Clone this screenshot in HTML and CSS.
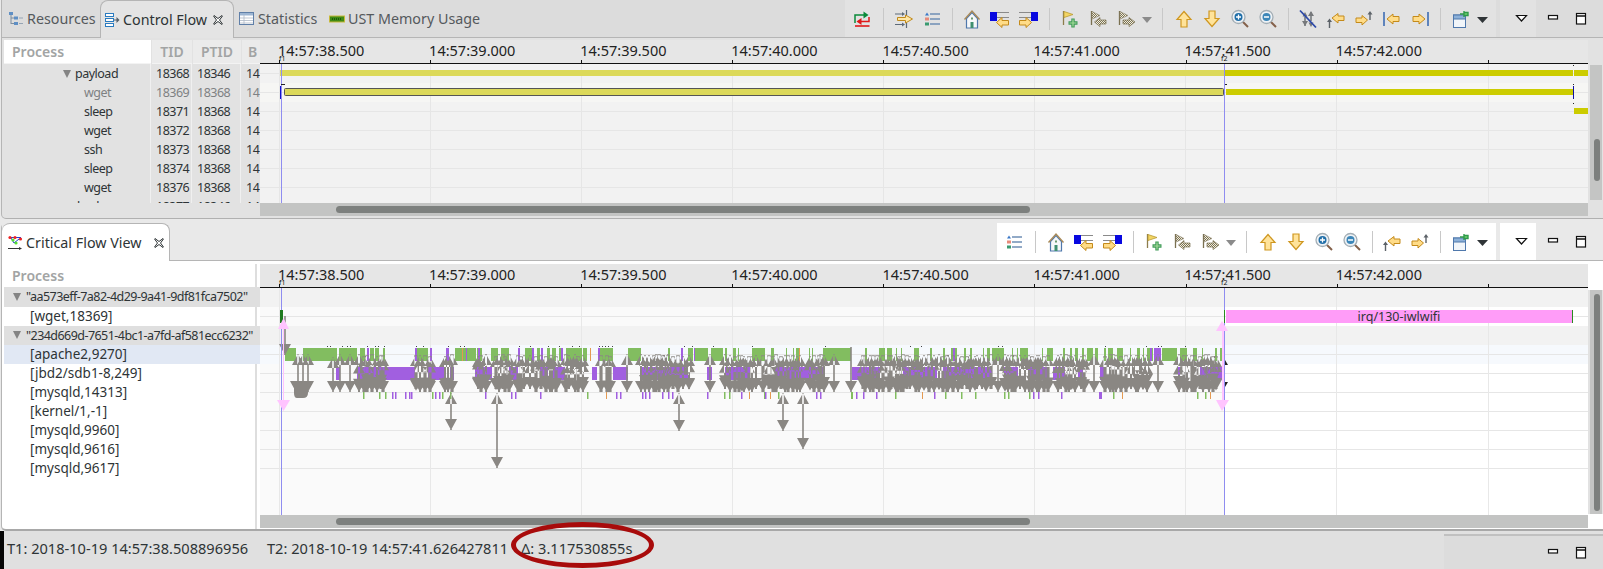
FILE: index.html
```html
<!DOCTYPE html>
<html lang="en">
<head>
<meta charset="utf-8">
<title>Critical Flow View</title>
<link rel="stylesheet" href="styles.css">
</head>
<body>
<svg class="defs" width="0" height="0" aria-hidden="true">
  <defs>
    <pattern id="hatch" width="2" height="2" patternUnits="userSpaceOnUse"><rect width="2" height="2" fill="#f4f0dc"/><rect width="1" height="1" fill="#7a7258"/><rect x="1" y="1" width="1" height="1" fill="#7a7258"/></pattern>
    <symbol id="i-sync" viewBox="0 0 20 20"><path d="M3 14V6H12" fill="none" stroke="#0a8a3a" stroke-width="1.500"/><path d="M11.500 2.500l5 3.500-5 3.500z" fill="#0a8a3a"/><path d="M17 8V12.500H9" fill="none" stroke="#e01818" stroke-width="1.500"/><path d="M9.500 9l-5 3.500 5 3.500z" fill="#e01818"/><path d="M3 17H17.500" stroke="#e01818" stroke-width="1.600"/></symbol>
    <symbol id="i-align" viewBox="0 0 20 20"><path d="M1 5H8M1 15.500H8M12.500 1V6M12.500 14V19" stroke="#5d6a78" stroke-width="1.200" fill="none"/><path d="M8 3l3 2-3 2zM8 13.500l3 2-3 2z" fill="#5d6a78"/><path d="M3.500 8.500H11.500V6l7 4-7 4V11.500H3.500z" fill="#ffe7a6" stroke="#c08a1c"/></symbol>
    <symbol id="i-list" viewBox="0 0 20 20"><path d="M8 5H18M8 10H18M8 15H18" stroke="#6f8fb5" stroke-width="1.600"/><path d="M3 6.500L5 3.500 7 6.500z" fill="#3a78c8"/><rect x="3" y="8.500" width="4" height="3" fill="#e88a7a"/><rect x="3" y="13.500" width="4" height="3" fill="#3a9a70"/></symbol>
    <symbol id="i-home" viewBox="0 0 20 20"><path d="M4.500 9.500V19H15.500V9.500L10 3.500z" fill="#f6f8fa" stroke="#4f78ac" stroke-width="1.200"/><path d="M2.500 10.500L10 2l7.500 8.500" fill="none" stroke="#a98a58" stroke-width="1.400"/><rect x="8.500" y="13" width="3" height="6" fill="#3f8f70"/><rect x="9" y="8.500" width="2" height="2" fill="#6a9a70"/></symbol>
    <symbol id="i-prev" viewBox="0 0 20 20"><rect x="0" y="3" width="7" height="9" fill="#0808e0"/><path d="M7 3.500H19M7 8.500H19" stroke="#8a8a8a" stroke-width="1.200"/><path d="M6.500 13.500l5.500-5v3h6.500v4.500H12v2.500z" fill="#ffdc88" stroke="#c48a1a"/></symbol>
    <symbol id="i-next" viewBox="0 0 20 20"><rect x="13" y="3" width="7" height="9" fill="#0808e0"/><path d="M1 3.500H13M1 8.500H13" stroke="#8a8a8a" stroke-width="1.200"/><path d="M13.500 13.500l-5.500-5v3H1.500v4.500H8v2.500z" fill="#ffdc88" stroke="#c48a1a"/></symbol>
    <symbol id="i-flagadd" viewBox="0 0 20 20"><path d="M3.500 2V16" stroke="#8d7d4c" stroke-width="1.300"/><path d="M4 2.500l9 3-9 3z" fill="#f3d564" stroke="#b99a34" stroke-width=".8"/><path d="M13 9.500v9M8.500 14h9" stroke="#3f9a58" stroke-width="3.400"/><path d="M13 10.500v7M9.500 14h7" stroke="#a5dc9a" stroke-width="1.200"/></symbol>
    <symbol id="i-flagprev" viewBox="0 0 20 20"><path d="M3.500 2V16" stroke="#7a7050" stroke-width="1.300"/><path d="M4 2.500l8 4-8 3.500z" fill="url(#hatch)" stroke="#8a8268" stroke-width=".6"/><path d="M6.500 13l5.500-4.500V11h6v4h-6v2.500z" fill="url(#hatch)" stroke="#7a7050" stroke-width=".7"/></symbol>
    <symbol id="i-flagnext" viewBox="0 0 20 20"><path d="M3.500 2V16" stroke="#7a7050" stroke-width="1.300"/><path d="M4 2.500l8 4-8 3.500z" fill="url(#hatch)" stroke="#8a8268" stroke-width=".6"/><path d="M19 13l-6-4.500V11H7v4h6v2.500z" fill="url(#hatch)" stroke="#7a7050" stroke-width=".7"/></symbol>
    <symbol id="i-dd" viewBox="0 0 14 20"><path d="M2 8h10l-5 6z" fill="#8b8b8b"/></symbol>
    <symbol id="i-ddd" viewBox="0 0 14 20"><path d="M1 8h11l-5.500 6z" fill="#2f3437"/></symbol>
    <symbol id="i-up" viewBox="0 0 20 20"><path d="M10 2.500l7 8h-4V18H7v-7.500H3z" fill="#ffe39a" stroke="#cf9720" stroke-width="1.200"/></symbol>
    <symbol id="i-down" viewBox="0 0 20 20"><path d="M10 17.500l7-8h-4V2H7v7.500H3z" fill="#ffe39a" stroke="#cf9720" stroke-width="1.200"/></symbol>
    <symbol id="i-zin" viewBox="0 0 20 20"><path d="M12.500 12.500L18 18" stroke="#84604a" stroke-width="2"/><circle cx="8.500" cy="8" r="6.500" fill="#eef2f6" stroke="#a3aeb5" stroke-width="1.300"/><circle cx="8.500" cy="8" r="4" fill="#1f6ea8"/><path d="M8.500 5.500v5M6 8h5" stroke="#fff" stroke-width="1.300"/></symbol>
    <symbol id="i-zout" viewBox="0 0 20 20"><path d="M12.500 12.500L18 18" stroke="#84604a" stroke-width="2"/><circle cx="8.500" cy="8" r="6.500" fill="#eef2f6" stroke="#a3aeb5" stroke-width="1.300"/><circle cx="8.500" cy="8" r="4" fill="#3c86b8"/><path d="M6 8h5" stroke="#fff" stroke-width="1.500"/></symbol>
    <symbol id="i-hide" viewBox="0 0 20 20"><path d="M7 8V17M13 3V12" stroke="#6f7478" stroke-width="1.500"/><path d="M4 12l3 5 3-5zM10 7l3-5 3 5zM4.500 7.500L7 3l2.500 4.500zM10.500 13.500L13 18l2.500-4.500z" fill="#77797c"/><path d="M2 1.500L18 18.500" stroke="#2b48a8" stroke-width="1.800"/></symbol>
    <symbol id="i-fprev" viewBox="0 0 20 20"><path d="M3.500 11V19" stroke="#5c6268" stroke-width="1.400"/><path d="M1 13l2.500-3.500L6 13z" fill="#5c6268"/><path d="M6 9l6-4.500V7h6v4.500h-6V14z" fill="#ffdc88" stroke="#c48a1a"/></symbol>
    <symbol id="i-fnext" viewBox="0 0 20 20"><path d="M16 4V11" stroke="#5c6268" stroke-width="1.400"/><path d="M13.500 5.500L16 2l2.500 3.500z" fill="#5c6268"/><path d="M13.500 11L8 6.500V9H2v4.500h6V16z" fill="#ffdc88" stroke="#c48a1a"/></symbol>
    <symbol id="i-first" viewBox="0 0 20 20"><path d="M2 3V17" stroke="#5f84bc" stroke-width="2"/><path d="M5 10l6-5V7.500h6V12.500H11V15z" fill="#ffdc88" stroke="#c48a1a"/></symbol>
    <symbol id="i-last" viewBox="0 0 20 20"><path d="M18 3V17" stroke="#5f84bc" stroke-width="2"/><path d="M15 10L9 5V7.500H3V12.500H9V15z" fill="#ffdc88" stroke="#c48a1a"/></symbol>
    <symbol id="i-pin" viewBox="0 0 20 20"><rect x="3.500" y="6" width="12" height="12.500" fill="#f1f5f9" stroke="#4f78ac"/><rect x="3.500" y="6" width="12" height="4" fill="#8cb0d8" stroke="#4f78ac"/><path d="M10 5H14M14 2V8M14 3.500H18V6.500H14" stroke="#2f9a4a" stroke-width="1.400" fill="#6fd06f"/></symbol>
    <symbol id="i-view" viewBox="0 0 20 20"><path d="M4.500 6.500H14.500L9.500 12z" fill="#fff" stroke="#111" stroke-width="1.200"/></symbol>
    <symbol id="i-min" viewBox="0 0 20 20"><rect x="5.500" y="6.500" width="9" height="3.500" fill="#fff" stroke="#111" stroke-width="1.200"/></symbol>
    <symbol id="i-max" viewBox="0 0 20 20"><rect x="5.500" y="4.500" width="9" height="10.500" fill="#fff" stroke="#111" stroke-width="1.200"/><path d="M5.500 7H14.500" stroke="#111" stroke-width="1.500"/></symbol>
    <symbol id="i-res" viewBox="0 0 16 16"><path d="M3 2V13M3 7H6M3 12.500H6" stroke="#7d8ea0" fill="none"/><rect x="1" y="1" width="4" height="3" fill="#5f8fc4"/><rect x="6" y="5.500" width="4" height="3" fill="#5f8fc4"/><rect x="6" y="11" width="4" height="3" fill="#5f8fc4"/><path d="M11 7H15M11 12.500H15" stroke="#95a4b4"/></symbol>
    <symbol id="i-cf" viewBox="0 0 16 16"><rect x="1.500" y="1.500" width="8" height="3" fill="#fff" stroke="#2b7cc0"/><rect x="1.500" y="6.500" width="8" height="3" fill="#fff" stroke="#2b7cc0"/><rect x="1.500" y="11.500" width="8" height="3" fill="#fff" stroke="#2b7cc0"/><path d="M10 8H13" stroke="#55606a"/><path d="M12.500 5l3 3-3 3z" fill="#55606a"/></symbol>
    <symbol id="i-st" viewBox="0 0 16 16"><rect x=".5" y="1.500" width="14" height="12" fill="#fff" stroke="#5f7fa8"/><rect x="1" y="2" width="13" height="2.500" fill="#9db6d3"/><path d="M1 7H14M1 9.500H14M1 12H14M5 4V13" stroke="#aeb9c6" stroke-width=".8"/></symbol>
    <symbol id="i-ust" viewBox="0 0 16 16"><rect x=".5" y="5" width="15" height="6" fill="#3f8a14" stroke="#c8b93a"/><path d="M3 8H13" stroke="#1e5c08" stroke-dasharray="1 1" stroke-width="2"/></symbol>
    <symbol id="i-close" viewBox="0 0 12 12"><path d="M2 1.500L6 4.500 10 1.500 10.500 2 7.500 6 10.500 10 10 10.500 6 7.500 2 10.500 1.500 10 4.500 6 1.500 2z" fill="#fff" stroke="#2e3436"/></symbol>
    <symbol id="i-crit" viewBox="0 0 16 16"><path d="M2 2.500H14M4 3L7 8 12 4" stroke="#1f3fd8" fill="none"/><path d="M1 13.500H14" stroke="#333"/><path d="M12 12l3 1.500-3 1.500z" fill="#333"/><circle cx="3" cy="2.500" r="1.600" fill="#ee2222"/><circle cx="8" cy="2.500" r="1.600" fill="#ee2222"/><circle cx="13.500" cy="4" r="1.600" fill="#ee2222"/><circle cx="6" cy="5" r="1.600" fill="#55dd33"/><circle cx="9" cy="8" r="1.600" fill="#55dd33"/></symbol>
  </defs>
</svg>

<section class="pane top-pane">
  <header class="tabbar">
    <nav class="tabs">
      <div class="tab tab-res"><svg class="tabic"><use href="#i-res"/></svg><span>Resources</span></div>
      <div class="tab tab-active tab-cf"><svg class="tabic"><use href="#i-cf"/></svg><span>Control Flow</span><svg class="closeic"><use href="#i-close"/></svg></div>
      <div class="tab tab-st"><svg class="tabic"><use href="#i-st"/></svg><span>Statistics</span></div>
      <div class="tab tab-ust"><svg class="tabic"><use href="#i-ust"/></svg><span>UST Memory Usage</span></div>
    </nav>
    <div class="tools tools-top">
      <svg class="ic"><use href="#i-sync"/></svg><i class="sep"></i>
      <svg class="ic"><use href="#i-align"/></svg><svg class="ic"><use href="#i-list"/></svg><i class="sep sep-n"></i>
      <svg class="ic"><use href="#i-home"/></svg><svg class="ic"><use href="#i-prev"/></svg><svg class="ic"><use href="#i-next"/></svg><i class="sep"></i>
      <svg class="ic"><use href="#i-flagadd"/></svg><svg class="ic"><use href="#i-flagprev"/></svg><svg class="ic"><use href="#i-flagnext"/></svg><svg class="dd"><use href="#i-dd"/></svg><i class="sep sep-w"></i>
      <svg class="ic"><use href="#i-up"/></svg><svg class="ic"><use href="#i-down"/></svg><svg class="ic"><use href="#i-zin"/></svg><svg class="ic"><use href="#i-zout"/></svg><i class="sep sep-n"></i>
      <svg class="ic"><use href="#i-hide"/></svg><svg class="ic"><use href="#i-fprev"/></svg><svg class="ic"><use href="#i-fnext"/></svg><svg class="ic"><use href="#i-first"/></svg><svg class="ic"><use href="#i-last"/></svg><i class="sep sep-n"></i>
      <svg class="ic"><use href="#i-pin"/></svg><svg class="dd dd-end"><use href="#i-ddd"/></svg>
    </div>
    <div class="viewmenu viewmenu-top"><svg class="ic"><use href="#i-view"/></svg></div>
    <div class="winbtns"><svg class="ic"><use href="#i-min"/></svg><svg class="ic"><use href="#i-max"/></svg></div>
  </header>
  <div class="pane-body">
    <div class="tree tree-top">
      <div class="thead">
        <div class="th c-name">Process</div><div class="th c-tid">TID</div><div class="th c-ptid">PTID</div><div class="th c-b">B</div>
      </div>
      <div class="tbody">
        <div class="tr"><div class="td c-name n-parent"><i class="twisty"></i>payload</div><div class="td c-tid">18368</div><div class="td c-ptid">18346</div><div class="td c-b">14</div></div>
        <div class="tr tr-dim"><div class="td c-name n-child">wget</div><div class="td c-tid">18369</div><div class="td c-ptid">18368</div><div class="td c-b">14</div></div>
        <div class="tr"><div class="td c-name n-child">sleep</div><div class="td c-tid">18371</div><div class="td c-ptid">18368</div><div class="td c-b">14</div></div>
        <div class="tr"><div class="td c-name n-child">wget</div><div class="td c-tid">18372</div><div class="td c-ptid">18368</div><div class="td c-b">14</div></div>
        <div class="tr"><div class="td c-name n-child">ssh</div><div class="td c-tid">18373</div><div class="td c-ptid">18368</div><div class="td c-b">14</div></div>
        <div class="tr"><div class="td c-name n-child">sleep</div><div class="td c-tid">18374</div><div class="td c-ptid">18368</div><div class="td c-b">14</div></div>
        <div class="tr"><div class="td c-name n-child">wget</div><div class="td c-tid">18376</div><div class="td c-ptid">18368</div><div class="td c-b">14</div></div>
        <div class="tr"><div class="td c-name n-tail">bash</div><div class="td c-tid">18377</div><div class="td c-ptid">18346</div><div class="td c-b">14</div></div>
      </div>
    </div>
    <div class="chartcol">
      <div class="axis">
        <span class="tk">14:57:38.500</span><span class="tk">14:57:39.000</span><span class="tk">14:57:39.500</span><span class="tk">14:57:40.000</span><span class="tk">14:57:40.500</span><span class="tk">14:57:41.000</span><span class="tk">14:57:41.500</span><span class="tk">14:57:42.000</span><span class="tk"></span>
        <b class="mark mark-1">f1</b><b class="mark mark-2">f2</b>
      </div>
      <svg class="plot plot-top" id="plotTop" viewBox="260 64 1328 139"></svg>
      <div class="hscroll"><div class="thumb"></div></div>
    </div>
    <div class="vscroll vscroll-top"><div class="vthumb"></div></div>
  </div>
</section>

<div class="split"></div>

<section class="pane lower-pane">
  <header class="tabbar tabbar-lower">
    <nav class="tabs">
      <div class="tab tab-active tab-crit"><svg class="tabic"><use href="#i-crit"/></svg><span>Critical Flow View</span><svg class="closeic"><use href="#i-close"/></svg></div>
    </nav>
    <div class="tools tools-lower">
      <svg class="ic"><use href="#i-list"/></svg><i class="sep"></i>
      <svg class="ic"><use href="#i-home"/></svg><svg class="ic"><use href="#i-prev"/></svg><svg class="ic"><use href="#i-next"/></svg><i class="sep"></i>
      <svg class="ic"><use href="#i-flagadd"/></svg><svg class="ic"><use href="#i-flagprev"/></svg><svg class="ic"><use href="#i-flagnext"/></svg><svg class="dd"><use href="#i-dd"/></svg><i class="sep sep-w"></i>
      <svg class="ic"><use href="#i-up"/></svg><svg class="ic"><use href="#i-down"/></svg><svg class="ic"><use href="#i-zin"/></svg><svg class="ic"><use href="#i-zout"/></svg><i class="sep sep-n"></i>
      <svg class="ic"><use href="#i-fprev"/></svg><svg class="ic"><use href="#i-fnext"/></svg><i class="sep sep-n"></i>
      <svg class="ic"><use href="#i-pin"/></svg><svg class="dd dd-end"><use href="#i-ddd"/></svg>
    </div>
    <div class="viewmenu viewmenu-lower"><svg class="ic"><use href="#i-view"/></svg></div>
    <div class="winbtns"><svg class="ic"><use href="#i-min"/></svg><svg class="ic"><use href="#i-max"/></svg></div>
  </header>
  <div class="pane-body pane-body-lower">
    <div class="tree tree-lower">
      <div class="lhead">Process</div>
      <div class="lrow lrow-group"><i class="twisty"></i>"aa573eff-7a82-4d29-9a41-9df81fca7502"</div>
      <div class="lrow">[wget,18369]</div>
      <div class="lrow lrow-group"><i class="twisty"></i>"234d669d-7651-4bc1-a7fd-af581ecc6232"</div>
      <div class="lrow lrow-sel">[apache2,9270]</div>
      <div class="lrow">[jbd2/sdb1-8,249]</div>
      <div class="lrow">[mysqld,14313]</div>
      <div class="lrow">[kernel/1,-1]</div>
      <div class="lrow">[mysqld,9960]</div>
      <div class="lrow">[mysqld,9616]</div>
      <div class="lrow">[mysqld,9617]</div>
    </div>
    <div class="chartcol">
      <div class="axis">
        <span class="tk">14:57:38.500</span><span class="tk">14:57:39.000</span><span class="tk">14:57:39.500</span><span class="tk">14:57:40.000</span><span class="tk">14:57:40.500</span><span class="tk">14:57:41.000</span><span class="tk">14:57:41.500</span><span class="tk">14:57:42.000</span><span class="tk"></span>
        <b class="mark mark-1">f1</b><b class="mark mark-2">f2</b>
      </div>
      <svg class="plot plot-lower" id="plotLower" viewBox="260 288 1328 227"></svg>
      <div class="hscroll"><div class="thumb"></div></div>
    </div>
    <div class="vscroll vscroll-lower"><div class="vthumb"></div></div>
  </div>
</section>

<footer class="status">
  <div class="status-left">
    <span class="st-t1">T1: 2018-10-19 14:57:38.508896956</span>
    <span class="st-t2">T2: 2018-10-19 14:57:41.626427811</span>
    <span class="st-d">Δ: 3.117530855s</span>
    <div class="ring"></div>
  </div>
  <div class="status-right"><svg class="ic"><use href="#i-min"/></svg><svg class="ic"><use href="#i-max"/></svg></div>
</footer>
<script src="chart.js"></script>
</body>
</html>
```
FILE: styles.css
```css
* { box-sizing: border-box; }
html, body { margin: 0; padding: 0; }
body {
  width: 1603px;
  height: 569px;
  overflow: hidden;
  background: #e9e9e9;
  font-family: "Noto Sans", "Open Sans", sans-serif;
  font-size: 13px;
  color: #2e3436;
  display: flex;
  flex-direction: column;
}
.defs { position: absolute; }

.pane { display: flex; flex-direction: column; margin-left: 1px; border-left: 1px solid #b5b5b5; }
.top-pane { height: 219px; background: #e2e2e2; border-bottom: 1px solid #b0b0b0; border-bottom-left-radius: 5px; }
.split { height: 4px; flex: none; background: #e9e9e9; }
.lower-pane { height: 308px; background: #fff; border-bottom: 2px solid #a8a8a8; border-bottom-left-radius: 5px; border-top-left-radius: 5px; }

.tabbar { height: 38px; flex: none; display: flex; align-items: stretch; background: #dcdcdc; border-bottom: 1px solid #b5b5b5; }
.tabbar-lower { background: #e9e9e9; }
.tabs { display: flex; align-items: stretch; }
.tab { display: flex; align-items: center; font-size: 14.300px; color: #55595c; white-space: nowrap; }
.tab-active {
  background: #e4e4e4;
  color: #2e3436;
  border: 1px solid #b5b5b5;
  border-bottom: none;
  border-radius: 8px 8px 0 0;
  margin-bottom: -1px;
}
.lower-pane .tab-active { background: #fff; border-left: none; }
.tabic { width: 16px; height: 16px; flex: none; margin-right: 3px; }
.closeic { width: 12px; height: 12px; flex: none; margin-left: 5px; }
.tab-res { width: 98px; padding-left: 6px; }
.tab-cf { width: 134px; padding-left: 3px; }
.tab-st { width: 92px; padding-left: 5px; }
.tab-ust { padding-left: 3px; }
.tab-crit { width: 168px; padding-left: 5px; }
.tab-crit .closeic { margin-left: 12px; }

.tools { margin-left: auto; display: flex; align-items: center; padding-right: 6px; height: 37px; align-self: flex-start; }
.tools-top { background: #e2e2e2; width: 651px; justify-content: flex-end; }
.tools-lower { background: #fff; width: 499px; justify-content: flex-end; }
.ic { width: 28px; height: 20px; flex: none; }
.dd { width: 14px; height: 20px; flex: none; }
.dd-end { margin-left: 2px; }
.sep { width: 14px; height: 22px; flex: none; position: relative; }
.sep-n { width: 12px; }
.sep-w { width: 16px; }
.sep::after { content: ""; position: absolute; left: 50%; top: 0; width: 1px; height: 22px; background: #c8c8c8; }
.viewmenu { width: 36px; display: flex; justify-content: flex-end; align-items: center; margin-left: 4px; height: 37px; }
.viewmenu-top { background: #e2e2e2; }
.viewmenu-lower { background: #fff; }
.winbtns { display: flex; align-items: center; padding: 0 8px 0 3px; height: 37px; }

.pane-body { flex: 1; min-height: 0; display: flex; padding: 2px 0 0 2px; }
.pane-body-lower { padding-top: 3px; }
.tree { width: 256px; flex: none; overflow: hidden; }

.tree-top { height: 163px; font-size: 12.500px; letter-spacing: -.5px; }
.thead { display: flex; height: 24px; letter-spacing: 0; }
.th { font-weight: 600; color: #a2a4a4; font-size: 14px; line-height: 23px; padding-left: 8px; background: #ebebeb; margin-right: 1px; border-bottom: 1px solid #f3f3f3; }
.th.c-name { background: #fff; }
.c-name { width: 147px; flex: none; }
.c-tid { width: 40px; flex: none; }
.c-ptid { width: 48px; flex: none; }
.c-b { width: 21px; flex: none; margin-right: 0; overflow: hidden; }
.th.c-tid, .th.c-ptid { text-align: center; padding-left: 0; }
.th.c-b { padding-left: 6px; }
.tbody { height: 139px; overflow: hidden; }
.tr { display: flex; height: 19px; line-height: 19px; }
.td { padding-left: 4px; margin-right: 1px; white-space: nowrap; overflow: hidden; border-right: 1px solid #f0f0f0; }
.td.c-b { border-right: none; margin-right: 0; }
.c-name.n-parent { padding-left: 59px; display: flex; align-items: center; }
.c-name.n-child { padding-left: 80px; }
.c-name.n-tail { padding-left: 73px; }
.tr-dim { color: #7e8183; }
.twisty { display: inline-block; width: 0; height: 0; border-left: 4px solid transparent; border-right: 4px solid transparent; border-top: 8px solid #848484; margin-right: 4px; }

.tree-lower { position: relative; font-size: 13.500px; }
.tree-lower::after { content: ""; position: absolute; right: 3px; top: 0; bottom: 0; width: 2px; background: #dedede; }
.lhead { height: 23px; line-height: 23px; font-size: 14px; font-weight: 600; color: #a2a4a4; padding-left: 8px; }
.lrow { height: 19px; line-height: 19px; padding-left: 26px; white-space: nowrap; position: relative; z-index: 1; }
.lrow-group { background: #dfdfdf; padding-left: 3px; height: 19.500px; display: flex; align-items: center; font-size: 12.500px; letter-spacing: -.55px; }
.lrow-group .twisty { margin: 0 5px 0 6px; }
.lrow-sel { background: #e1e8f4; }

.chartcol { width: 1328px; flex: none; display: flex; flex-direction: column; }
.axis { position: relative; height: 24px; flex: none; display: flex; padding-left: 19px; background: #e6e6e6; border-bottom: 1px solid #111; font-size: 14.500px; line-height: 20px; color: #222; }
.tk { width: 151.100px; flex: none; position: relative; white-space: nowrap; text-indent: -1px; }
.tk::after { content: ""; position: absolute; left: 0; bottom: 0; width: 1px; height: 3px; background: #111; }
.mark { position: absolute; top: 15px; font-size: 7px; line-height: 8px; font-weight: 400; color: #111; background: transparent; }
.mark-1 { left: 19px; }
.mark-2 { left: 961px; }
.plot { flex: 1; min-height: 0; width: 1328px; display: block; }
.plot-top { height: 139px; flex: none; }
.plot-lower { height: 227px; flex: none; }
.hscroll { height: 13px; flex: none; background: #c3c4c3; padding: 3px 0 0 76px; }
.thumb { width: 694px; height: 7px; border-radius: 4px; background: #7d807e; }

.vscroll { width: 15px; flex: none; padding: 0; }
.vthumb { background: #7d807e; border-radius: 4px; width: 6px; }
.vscroll-top { height: 160px; margin-top: 25px; background: linear-gradient(90deg, #e2e2e2 2px, #c4c5c4 2px, #c4c5c4 14px, #e2e2e2 14px) no-repeat 0 0 / 100% 135px; }
.vscroll-top .vthumb { height: 42px; margin: 74px 0 0 6px; }
.vscroll-lower { height: 224px; margin-top: 26px; background: linear-gradient(90deg, #e2e2e2 2px, #c4c5c4 2px, #c4c5c4 14px, #e2e2e2 14px); }
.vscroll-lower .vthumb { height: 217px; margin: 4px 0 0 6px; }

.status { height: 38px; flex: none; display: flex; background: #e0e0e0; font-size: 14.600px; color: #2e3436; border-left: 4px solid #050505; }
.status-left { position: relative; width: 1440px; display: flex; align-items: center; height: 33px; padding-left: 3px; white-space: nowrap; border-top: 1px solid #e0e0e0; }
.st-t1 { width: 260px; flex: none; }
.st-t2 { width: 254px; flex: none; }
.ring { position: absolute; left: 507px; top: -10px; width: 143px; height: 46px; border: 5px solid #a80b0b; border-radius: 50%; }
.status-right { flex: 1; background: #dcdcdc; border-top: 2px solid #c0c0c0; margin-top: 3px; display: flex; justify-content: flex-end; align-items: center; padding-right: 8px; }
```
FILE: chart.js
```js
(function () {
  var NS = 'http://www.w3.org/2000/svg';
  function el(parent, name, attrs, text) {
    var n = document.createElementNS(NS, name);
    for (var k in attrs) n.setAttribute(k, attrs[k]);
    if (text) n.textContent = text;
    parent.appendChild(n);
    return n;
  }
  function rect(p, x, y, w, h, fill) { return el(p, 'rect', { x: x, y: y, width: w, height: h, fill: fill }); }
  var TICKS = [279, 430, 581, 732, 883, 1034, 1185, 1336, 1488];
  var T1 = 281, T2 = 1224;

  /* ---------- Control Flow ---------- */
  var a = document.getElementById('plotTop');
  rect(a, 260, 64, 1328, 139, '#f2f2f2');
  rect(a, 260, 83, 1328, 19, '#f6f6f4');
  [73, 92, 111, 130, 149, 168, 187].forEach(function (y) { rect(a, 260, y, 1328, 1, '#e6e6e6'); });
  TICKS.forEach(function (x) { rect(a, x, 64, 1, 139, '#e6e6e6'); });
  rect(a, 280, 70, 944, 6, '#dcd95a');
  rect(a, 1224, 70, 349, 6, '#cccc00');
  rect(a, 1574, 70, 14, 6, '#cccc00');
  rect(a, 280, 86, 2, 13, '#1212cc');
  el(a, 'rect', { x: 284.5, y: 88.5, width: 939, height: 7, fill: '#dcd95a', stroke: '#555', rx: 1 });
  rect(a, 1226, 89, 347, 6, '#cccc00');
  rect(a, 1573, 86, 1, 13, '#1010a0');
  rect(a, 1574, 108, 14, 6, '#cccc00');
  rect(a, T1, 64, 1, 139, '#8f8df0');
  rect(a, T2, 64, 1, 139, '#8f8df0');
  rect(a, 281, 84, 4, 1, '#222');
  rect(a, 1225, 84, 2, 1, '#222');
  rect(a, 1573, 65, 1, 1, '#222');
  rect(a, 1573, 84, 1, 1, '#222');
  rect(a, 1573, 103, 1, 1, '#222');

  /* ---------- Critical Flow ---------- */
  var s = document.getElementById('plotLower');
  rect(s, 260, 288, T2 - 260, 227, '#fafafa');
  rect(s, T2, 288, 1588 - T2, 227, '#ffffff');
  rect(s, 260, 288, 1328, 19, '#f2f2f2');
  rect(s, 260, 326, 1328, 19, '#f2f2f2');
  rect(s, 260, 345, 1328, 19, '#f6f9fd');
  [316, 354, 373, 392, 411, 430, 449, 468].forEach(function (y) { rect(s, 260, y, 1328, 1, '#e6e6e6'); });
  TICKS.forEach(function (x) { rect(s, x, 288, 1, 227, '#e8e8e8'); });

  var GREEN = '#82bd60', PURPLE = '#a15fe0', ORANGE = '#e49a52';
  var green = [[285, 296], [303, 337], [339, 357], [360, 365], [370, 374], [375, 379], [383, 385], [417, 428], [455, 476], [477, 482], [491, 498], [501, 509], [525, 532], [537, 540], [547, 550], [552, 556], [559, 563], [566, 582], [583, 587], [598, 607], [607, 613], [628, 641],
    [668, 670], [688, 693], [695, 708], [711, 723], [725, 727], [733, 736], [738, 739], [752, 765], [771, 774], [786, 787], [793, 794], [796, 799], [809, 810], [812, 813], [823, 851], [865, 867], [879, 885], [887, 892], [896, 897], [901, 902], [914, 919], [930, 932], [943, 945],
    [951, 957], [964, 966], [970, 972], [983, 984], [987, 990], [992, 1004], [1012, 1013], [1017, 1018], [1020, 1028], [1042, 1043], [1047, 1053], [1063, 1065], [1070, 1072], [1075, 1078], [1082, 1084], [1087, 1093], [1095, 1098], [1104, 1106], [1108, 1113], [1117, 1123], [1130, 1131], [1137, 1140], [1143, 1144], [1147, 1153], [1162, 1177], [1180, 1187], [1193, 1197], [1202, 1203], [1215, 1217], [1220, 1222]];
  green.forEach(function (r) { rect(s, r[0], 348, r[1] - r[0], 13, GREEN); });
  [[367, 369], [415, 417], [430, 432], [446, 449], [466, 467], [478, 480], [518, 520], [532, 534], [541, 543], [561, 563], [598, 600], [681, 683], [694, 695], [1154, 1161], [1150, 1152], [953, 955]].forEach(function (r) { rect(s, r[0], 348, r[1] - r[0], 13, PURPLE); });
  [462, 590, 799].forEach(function (x) { rect(s, x, 348, 1, 13, ORANGE); });
  [[336, 340], [357, 415], [428, 445], [450, 454], [475, 492], [509, 518], [540, 548], [553, 565], [592, 597], [613, 628], [641, 688], [707, 712], [725, 750], [775, 823], [852, 880], [903, 937], [943, 992], [1004, 1018], [1028, 1048], [1053, 1065], [1078, 1083], [1100, 1105], [1178, 1180], [1200, 1222]].forEach(function (r) {
    rect(s, r[0], 367, r[1] - r[0], 13, PURPLE);
  });
  var lows = {
    g: [363, 379, 385, 432, 442, 450, 587, 724, 729, 764, 778, 895, 945, 961, 975, 1004, 1008, 1029, 1113, 1197, 1205],
    p: [392, 395, 405, 409, 411, 435, 439, 485, 511, 515, 540, 616, 620, 642, 645, 649, 662, 668, 672, 707, 741, 765, 816, 820, 856, 863, 876, 934, 1033, 1038, 1061],
    o: [606, 749, 770, 922, 1122, 1210]
  };
  lows.g.forEach(function (x) { rect(s, x, 392, 1.500, 7, GREEN); });
  lows.p.forEach(function (x) { rect(s, x, 392, 1.500, 7, PURPLE); });
  lows.o.forEach(function (x) { rect(s, x, 392, 1, 7, ORANGE); });
  rect(s, 1099, 392, 3, 7, PURPLE);
  rect(s, 851, 392, 2, 7, GREEN);
  [327, 330, 342, 347, 350, 367, 375, 378, 384, 416, 423, 448, 460, 464, 519, 530, 548, 559, 572, 579, 599, 602, 605, 608, 612, 684, 692, 713, 752, 825, 910, 921, 998, 1002, 1105, 1146, 1158, 1161, 1185].forEach(function (x) { rect(s, x, 346, 1, 1, '#444'); });

  var d = '';
  function head(x, tip, dir, w, h) {
    var b = tip + dir * h;
    d += 'M' + x + ' ' + tip + 'L' + (x - w / 2) + ' ' + b + 'L' + (x + w / 2) + ' ' + b + 'Z';
  }
  function arrow(x, y1, y2, upHead, downHead, sw) {
    var t = sw || 0.8;
    d += 'M' + (x - t) + ' ' + y1 + 'H' + (x + t) + 'V' + y2 + 'H' + (x - t) + 'Z';
    if (upHead !== false) head(x, y1, 1, 12, 11);
    if (downHead !== false) head(x, y2, -1, 12, 11);
  }
  var dense = [[356, 387], [413, 435], [442, 458], [475, 490], [493, 512], [515, 532], [533, 560], [563, 588], [598, 613], [638, 670], [660, 692], [722, 760], [760, 803], [807, 828], [860, 893], [893, 950], [945, 995], [1002, 1052], [1055, 1088], [1102, 1152], [1176, 1220]];
  var seed = 7;
  function rnd() { seed = (seed * 16807) % 2147483647; return seed / 2147483647; }
  dense.forEach(function (r) {
    for (var x = r[0] + 3; x < r[1] - 2; x += 2.200 + rnd() * 3.500) {
      var xx = Math.round(x);
      arrow(xx, 354 + Math.round(rnd() * 2), 392 - (rnd() < 0.35 ? 3 : 0), true, true, rnd() < 0.5 ? 1 : 1.600);
      if (rnd() < 0.55) head(xx, 358 + rnd() * 6, 1, 12, 11);
      if (rnd() < 0.75) head(xx, 392 - rnd() * 7, -1, 12, 11);
    }
  });
  [[333, 3], [340, 0], [350, 0], [298, 0], [303, 0], [308, 0], [627, 0], [710, 0], [834, 0], [1094, 0], [1158, 0]].forEach(function (p) { arrow(p[0], 354 + p[1], 392); });
  arrow(851, 347, 392, false, true);
  arrow(998, 354, 392);
  d += 'M294 385H308V393Q308 398 303 398H297Q294 398 294 393Z';
  head(296, 392, -1, 12, 11);
  head(305, 392, -1, 12, 11);
  arrow(451, 393, 430);
  arrow(497, 393, 468);
  arrow(679, 393, 431);
  arrow(783, 393, 431);
  arrow(803, 393, 449);
  arrow(285, 316, 355, false, true);
  el(s, 'path', { d: d, fill: '#8a8783' });

  rect(s, T1, 288, 1, 227, '#8f8df0');
  rect(s, T2, 288, 1, 227, '#8f8df0');
  rect(s, 280, 310, 3, 13, '#1f7a1f');
  rect(s, 1224, 310, 1, 13, '#2a8a20');
  rect(s, 1226, 310, 346, 13, '#ff9cf8');
  rect(s, 1572, 310, 1, 13, '#2a8a20');
  el(s, 'text', { x: 1399, y: 321, 'text-anchor': 'middle', 'font-size': 12.500, fill: '#2e3436', 'font-family': '"Noto Sans", sans-serif' }, 'irq/130-iwlwifi');
  var pink = '#ffc4ff';
  rect(s, 283, 325, 1, 80, pink);
  rect(s, 1222, 325, 2, 80, pink);
  el(s, 'path', { d: 'M283.500 318L278 329H289ZM283.500 411L277 400H290ZM1222 321L1216 331H1228ZM1222 411L1216 400H1229Z', fill: pink });
  el(s, 'path', { d: 'M1225 360l3 5h-3zM1225 382h3l-3 5z', fill: '#222' });
})();
```
